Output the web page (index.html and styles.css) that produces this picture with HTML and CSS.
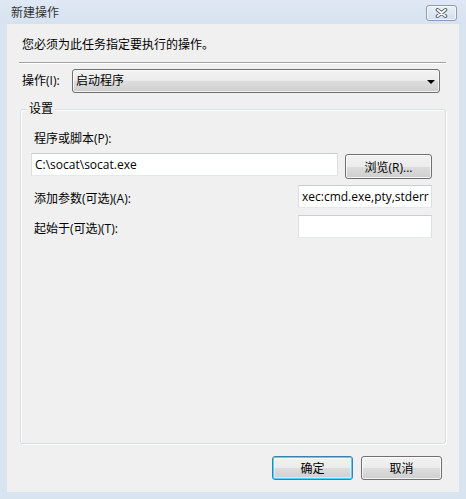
FILE: index.html
```html
<!DOCTYPE html>
<html lang="zh-CN">
<head>
<meta charset="utf-8">
<title>新建操作</title>
<link rel="stylesheet" href="styles.css">
</head>
<body>
<div class="window">
  <div class="titlebar">
    <span class="title">新建操作</span>
    <button class="close" type="button" aria-label="关闭">
      <svg width="13" height="10" viewBox="0 0 13 10">
        <path d="M2.5 1.8 L10.5 8.2 M10.5 1.8 L2.5 8.2" stroke="#4b5868" stroke-width="3.6" stroke-linecap="round" fill="none"/>
        <path d="M2.5 1.8 L10.5 8.2 M10.5 1.8 L2.5 8.2" stroke="#ffffff" stroke-width="1.8" stroke-linecap="round" fill="none"/>
      </svg>
    </button>
  </div>
  <div class="content">
    <div class="instruction">您必须为此任务指定要执行的操作。</div>
    <div class="separator"></div>
    <div class="action-row">
      <span class="label">操作(I):</span>
      <div class="combo">
        <span class="combo-text">启动程序</span>
        <span class="combo-arrow"></span>
      </div>
    </div>
    <div class="group">
      <span class="legend">设置</span>
      <div class="field-label">程序或脚本(P):</div>
      <div class="program-row">
        <input class="textbox program" type="text" value="C:\socat\socat.exe">
        <button class="btn browse" type="button">浏览(R)...</button>
      </div>
      <div class="param-row first">
        <span class="label">添加参数(可选)(A):</span>
        <input class="textbox param" type="text" value="xec:cmd.exe,pty,stderr">
      </div>
      <div class="param-row second">
        <span class="label">起始于(可选)(T):</span>
        <input class="textbox param" type="text" value="">
      </div>
    </div>
    <div class="footer">
      <button class="btn ok" type="button">确定</button>
      <button class="btn cancel" type="button">取消</button>
    </div>
  </div>
</div>
</body>
</html>
```

FILE: styles.css
```css
html, body {
  margin: 0;
  padding: 0;
  background: #d9e4f1;
}
body {
  font-family: "Open Sans", "Noto Sans CJK SC", sans-serif;
  font-size: 12px;
  color: #000;
}
.window {
  width: 466px;
  height: 499px;
  box-sizing: border-box;
  padding: 0 7px 7px 7px;
  background: #d9e4f1;
  display: flex;
  flex-direction: column;
}
.titlebar {
  height: 24px;
  flex: none;
  display: flex;
  justify-content: space-between;
  align-items: flex-start;
  background: linear-gradient(#dfe8f4, #d7e2f0);
  margin: 0 -7px;
  padding: 0 9px 0 11px;
}
.title {
  margin-top: 5px;
  line-height: 16px;
  color: #333;
}
.close {
  margin-top: 5px;
  width: 31px;
  height: 16px;
  padding: 0;
  box-sizing: border-box;
  border: 1px solid #8c9cb0;
  border-radius: 3px;
  background: linear-gradient(#e9eff7, #d5dfeb);
  box-shadow: inset 0 0 0 1px rgba(255,255,255,0.6);
  display: flex;
  align-items: center;
  justify-content: center;
}
.close svg {
  display: block;
}
.content {
  flex: 1;
  background: #f0f0f0;
  display: flex;
  flex-direction: column;
}
.instruction {
  margin: 13px 0 0 15px;
  line-height: 16px;
}
.separator {
  margin: 9px 13px 0 12px;
  border-top: 1px solid #a0a0a0;
  border-bottom: 1px solid #ffffff;
  height: 0;
}
.action-row {
  display: flex;
  align-items: center;
  margin: 5px 0 0 15px;
  height: 24px;
}
.label {
  line-height: 16px;
}
.combo {
  margin-left: auto;
  margin-right: 19px;
  width: 368px;
  height: 24px;
  box-sizing: border-box;
  border: 1px solid #707070;
  border-radius: 3px;
  background: linear-gradient(#f2f2f2 0%, #ebebeb 50%, #dddddd 51%, #cfcfcf 100%);
  box-shadow: inset 0 0 0 1px rgba(255,255,255,0.7);
  display: flex;
  align-items: center;
  padding: 0 4px 0 3px;
}
.combo-text {
  line-height: 16px;
  flex: 1;
}
.combo-arrow {
  width: 0;
  height: 0;
  border-left: 4px solid transparent;
  border-right: 4px solid transparent;
  border-top: 4px solid #000;
  margin-top: 1px;
}
.group {
  margin: 16px 13px 0 13px;
  height: 335px;
  box-sizing: border-box;
  border: 1px solid #d5dfe5;
  border-radius: 3px;
  box-shadow: inset 1px 1px 0 #ffffff, 1px 1px 0 #ffffff;
  display: flex;
  flex-direction: column;
}
.legend {
  align-self: flex-start;
  margin: -9px 0 0 6px;
  padding: 0 2px;
  line-height: 16px;
  background: #f0f0f0;
}
.field-label {
  margin: 14px 0 0 13px;
  line-height: 16px;
}
.program-row {
  display: flex;
  align-items: flex-start;
  margin: 6px 0 0 10px;
}
.textbox {
  font-family: inherit;
  font-size: 12px;
  color: #000;
  box-sizing: border-box;
  height: 23px;
  margin: 0;
  padding: 0 1px 0 3px;
  background: #fff;
  border: 1px solid #dbdfe6;
  border-top-color: #c8ccd3;
  border-bottom-color: #e3e9ef;
  outline: none;
}
.program {
  width: 307px;
}
.btn {
  font-family: inherit;
  font-size: 12px;
  color: #000;
  box-sizing: border-box;
  padding: 0;
  border: 1px solid #707070;
  border-radius: 3px;
  background: linear-gradient(#f2f2f2 0%, #ebebeb 50%, #dddddd 51%, #cfcfcf 100%);
  box-shadow: inset 0 0 0 1px rgba(255,255,255,0.75);
}
.browse {
  margin: 1px 0 0 7px;
  width: 87px;
  height: 25px;
}
.param-row {
  display: flex;
  align-items: flex-start;
  justify-content: space-between;
  padding: 0 13px 0 13px;
}
.param-row.first {
  margin-top: 6px;
}
.param-row.second {
  margin-top: 7px;
}
.param-row .label {
  padding-top: 6px;
}
.param {
  width: 134px;
}
.footer {
  display: flex;
  justify-content: flex-end;
  gap: 8px;
  margin: 12px 17px 0 0;
}
.ok, .cancel {
  width: 81px;
  height: 24px;
}
.ok {
  border-color: #3c7fb1;
  box-shadow: inset 0 0 0 1px #48d8fb, inset 0 0 0 2px rgba(255,255,255,0.4);
}
```
